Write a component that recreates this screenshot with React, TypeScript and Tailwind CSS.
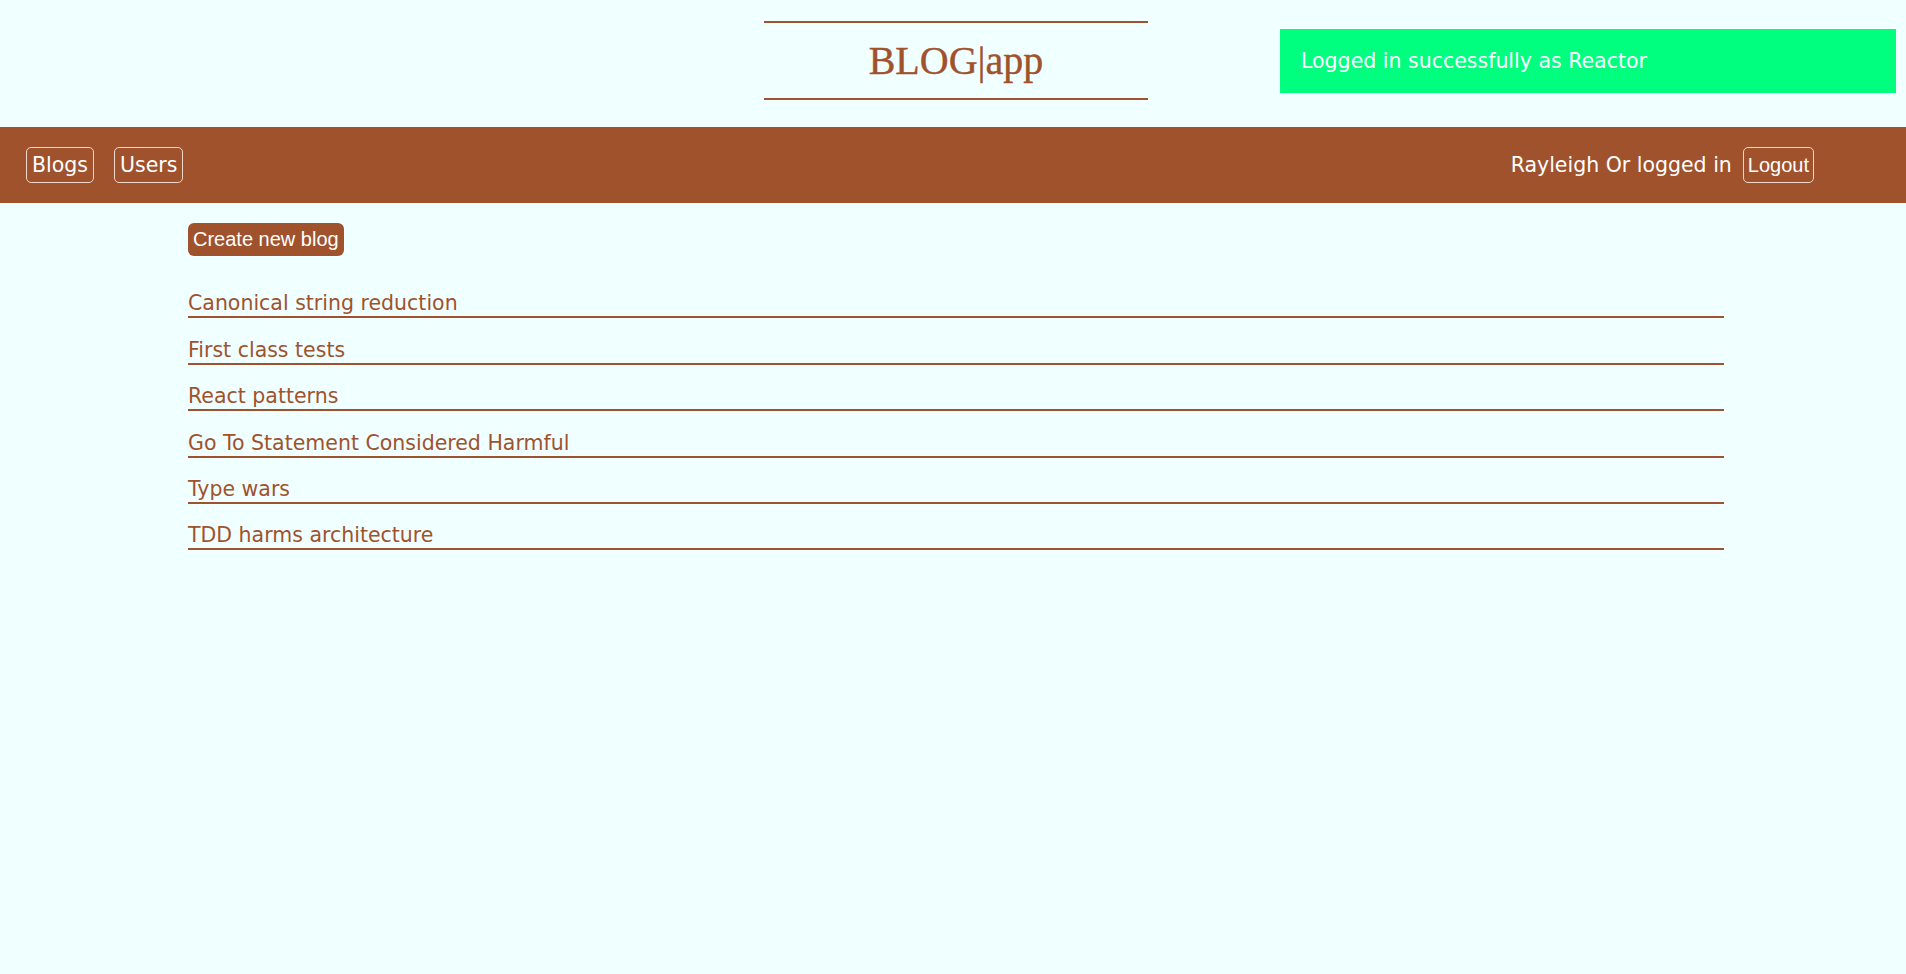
const blogs = [
  "Canonical string reduction",
  "First class tests",
  "React patterns",
  "Go To Statement Considered Harmful",
  "Type wars",
  "TDD harms architecture",
]

export default function App() {
  return (
    <div className="min-h-screen bg-[#f0ffff] font-['DejaVu_Sans',sans-serif]">
      <header className="grid h-[127px] grid-cols-[1fr_384px_1fr] pl-[6px] pt-[21px]">
        <div />
        <div className="flex h-[79px] items-center justify-center border-y-2 border-[#a0522d]">
          <h1 className="font-['Liberation_Serif',serif] text-[40px] leading-none text-[#a0522d] [-webkit-text-stroke:0.4px_#a0522d]">
            BLOG|app
          </h1>
        </div>
        <div className="pl-[132px] pt-[8px]">
          <div className="flex h-[64px] w-[616px] items-center bg-[#00ff7f] px-[21px] text-[20.5px] text-white">
            Logged in successfully as Reactor
          </div>
        </div>
      </header>

      <nav className="flex h-[76px] items-center bg-[#a0522d] pl-[26px] pr-[92px] text-white">
        <div className="flex gap-[20px]">
          <a className="rounded-[5px] border border-[#f0d8cc] px-[5px] py-[3px] text-[20.5px] leading-[28px]">Blogs</a>
          <a className="rounded-[5px] border border-[#f0d8cc] px-[5px] py-[3px] text-[20.5px] leading-[28px]">Users</a>
        </div>
        <div className="ml-auto flex items-center gap-[11px]">
          <span className="text-[20.5px]">Rayleigh Or logged in</span>
          <button className="rounded-[5px] border border-[#f0d8cc] px-[4px] py-[3px] font-['Liberation_Sans',sans-serif] text-[20px] leading-[28px]">
            Logout
          </button>
        </div>
      </nav>

      <main className="ml-[188px] w-[1536px] pt-[20px]">
        <button className="rounded-[6px] bg-[#a0522d] px-[5px] py-[3px] font-['Liberation_Sans',sans-serif] text-[20px] leading-[27px] text-white">
          Create new blog
        </button>
        <ul className="mt-[16px]">
          {blogs.map((b) => (
            <li key={b} className="flex h-[46.4px] items-end border-b-2 border-[#a0522d]">
              <a className="text-[20.5px] leading-[26px] text-[#a0522d]">{b}</a>
            </li>
          ))}
        </ul>
      </main>
    </div>
  )
}
